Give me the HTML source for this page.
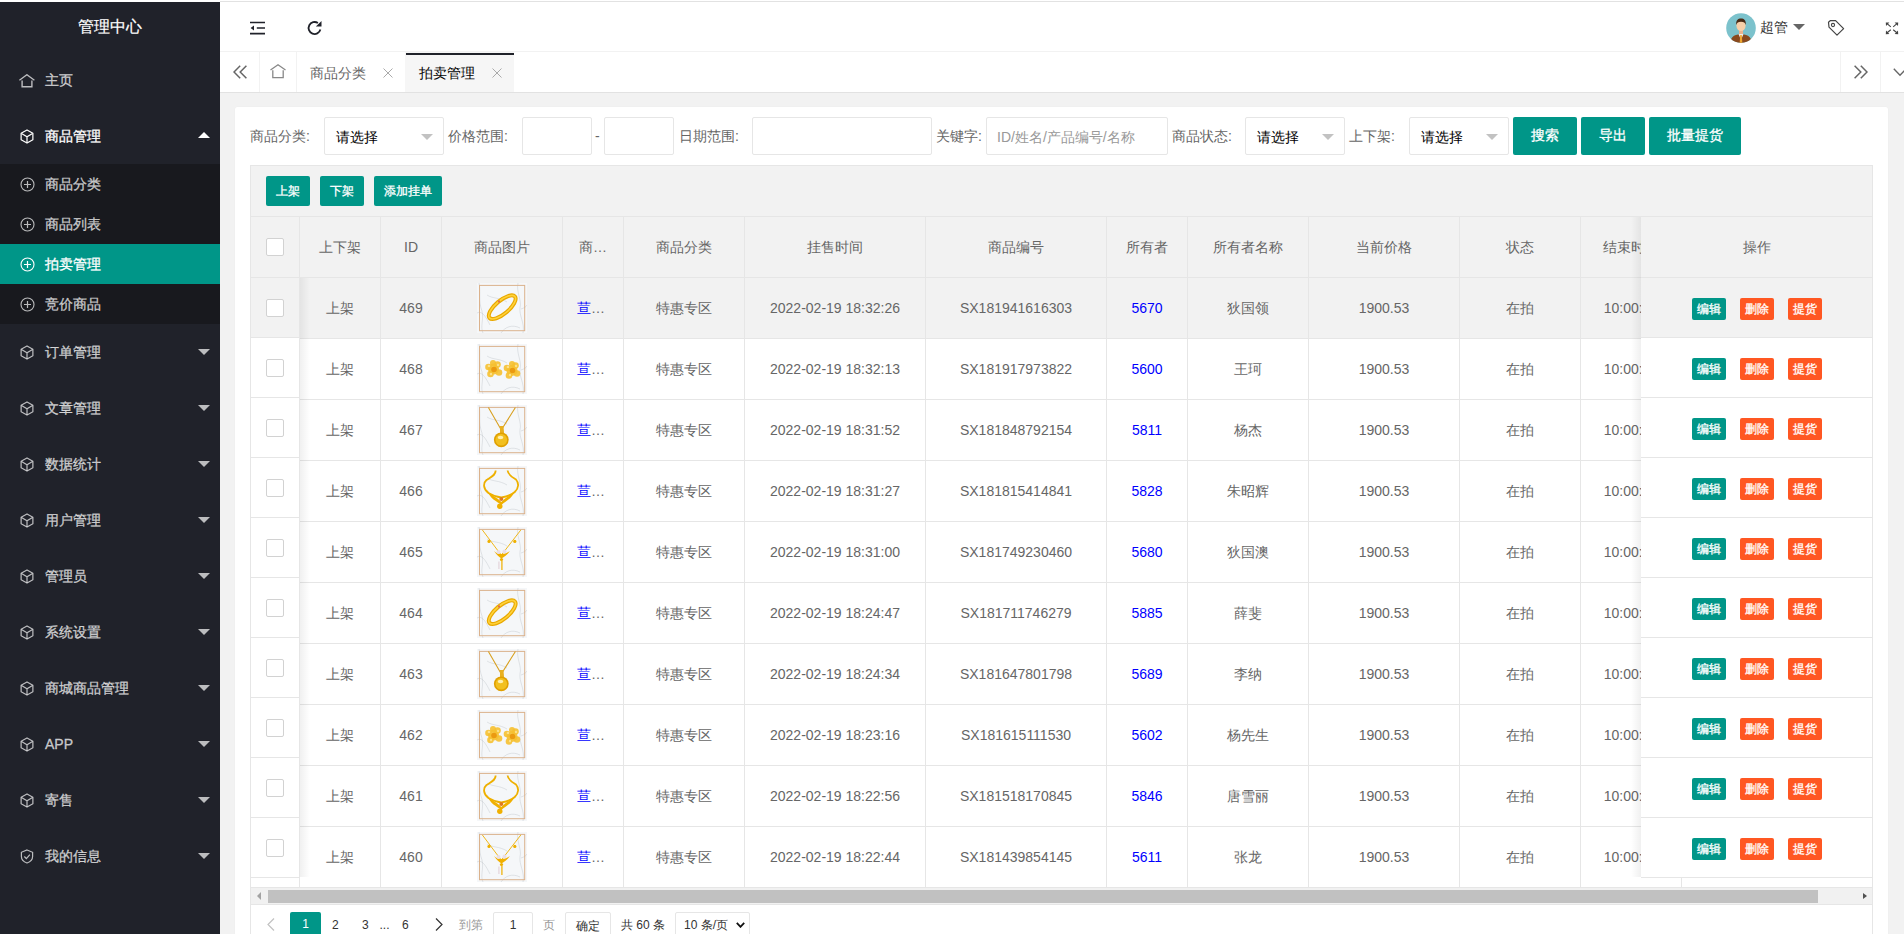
<!DOCTYPE html><html><head><meta charset="utf-8"><title>拍卖管理</title><style>
*{margin:0;padding:0;box-sizing:border-box}
html,body{width:1904px;height:934px;overflow:hidden;background:#fff;font-family:"Liberation Sans",sans-serif;font-size:14px;color:#666}
.abs{position:absolute}
#side{position:absolute;left:0;top:2px;width:220px;height:932px;background:#20222A;overflow:hidden}
#logo{position:absolute;left:0;top:0;width:220px;height:50px;line-height:50px;text-align:center;color:#fff;font-size:16px}
.mi{position:absolute;left:0;width:220px;height:56px;line-height:56px;color:rgba(255,255,255,.7)}
.mi .t{position:absolute;left:45px;top:0}
.mi svg{position:absolute}
.mi .tri{position:absolute;left:198px;width:0;height:0;border-left:6px solid transparent;border-right:6px solid transparent}
.sub{position:absolute;left:0;width:220px;height:40px;line-height:40px;color:rgba(255,255,255,.7)}
.sub .t{position:absolute;left:45px;top:0}
.sub svg{position:absolute;left:20px;top:13px}
#hdr{position:absolute;left:220px;top:1px;width:1684px;height:51px;border-top:1px solid #e2e2e2;background:#fff;border-bottom:1px solid #f2f2f2}
#tabs{position:absolute;left:220px;top:52px;width:1684px;height:41px;background:#fff;border-bottom:1px solid #e2e2e2}
#gray{position:absolute;left:220px;top:93px;width:1684px;height:841px;background:#f2f2f2}
#card{position:absolute;left:235px;top:107px;width:1653px;height:840px;background:#fff;border-radius:2px;box-shadow:0 0 1px rgba(0,0,0,.08)}
.lbl{position:absolute;top:117px;height:38px;line-height:38px;color:#666;font-size:14px;white-space:nowrap}
.inp{position:absolute;top:117px;height:38px;border:1px solid #e6e6e6;border-radius:2px;background:#fff}
.sel .v{position:absolute;left:11px;top:0;line-height:38px;color:#000;font-size:14px}
.sel .ar{position:absolute;right:10px;top:16px;width:0;height:0;border-left:6px solid transparent;border-right:6px solid transparent;border-top:6px solid #c2c2c2}
.btn{position:absolute;background:#009688;color:#fff;text-align:center;border-radius:2px;white-space:nowrap}
.bl{position:absolute;top:117px;height:38px;line-height:37px;font-size:14px}
.bs{position:absolute;top:176px;height:30px;line-height:30px;font-size:12px}
.cell{position:absolute;text-align:center;white-space:nowrap;overflow:hidden;color:#666}
.vl{position:absolute;width:1px;background:#e6e6e6}
.hl{position:absolute;height:1px;background:#e6e6e6}
.cb{position:absolute;width:18px;height:18px;border:1px solid #d2d2d2;background:#fff;border-radius:2px}
.mi .t,.sub .t{-webkit-text-stroke:.3px currentColor}
#logo{-webkit-text-stroke:.2px #fff}
.btn,.xs{-webkit-text-stroke:.3px #fff}
.xs{position:absolute;height:22px;line-height:22px;font-size:12px;color:#fff;text-align:center;border-radius:2px;width:34px}
</style></head><body><div id="side"><div id="logo">管理中心</div><div class="mi" style="top:50px"><svg width="16" height="15" viewBox="0 0 16 15" style="left:19px;top:21.5px"><path d="M0.4 6.3 L7.9 0.7 L15.4 6.3" fill="none" stroke="currentColor" stroke-width="1.3"/><path d="M3.1 6.6 V12.8 H12.9 V6.6" fill="none" stroke="currentColor" stroke-width="1.4"/></svg><span class="t">主页</span></div><div class="mi" style="top:106px;color:#fff"><svg width="14" height="15" viewBox="0 0 15 16" style="left:19.5px;top:20.5px"><path d="M7.5 1 L13.8 4.5 V11.5 L7.5 15 L1.2 11.5 V4.5 Z" fill="none" stroke="currentColor" stroke-width="1.3" stroke-linejoin="round"/><path d="M1.6 4.8 L7.5 8.2 L13.4 4.8 M7.5 8.2 V14.6" fill="none" stroke="currentColor" stroke-width="1.3"/></svg><span class="t">商品管理</span><span class="tri" style="top:24px;border-bottom:6px solid #fff"></span></div><div class="abs" style="left:0;top:162px;width:220px;height:160px;background:#18191e"></div><div class="sub" style="top:162px"><svg width="15" height="15" viewBox="0 0 15 15"><circle cx="7.5" cy="7.5" r="6.5" fill="none" stroke="currentColor" stroke-width="1.1"/><path d="M7.5 4 V11 M4 7.5 H11" stroke="currentColor" stroke-width="1.2"/></svg><span class="t">商品分类</span></div><div class="sub" style="top:202px"><svg width="15" height="15" viewBox="0 0 15 15"><circle cx="7.5" cy="7.5" r="6.5" fill="none" stroke="currentColor" stroke-width="1.1"/><path d="M7.5 4 V11 M4 7.5 H11" stroke="currentColor" stroke-width="1.2"/></svg><span class="t">商品列表</span></div><div class="sub" style="top:242px;background:#009688;color:#fff"><svg width="15" height="15" viewBox="0 0 15 15"><circle cx="7.5" cy="7.5" r="6.5" fill="none" stroke="currentColor" stroke-width="1.1"/><path d="M7.5 4 V11 M4 7.5 H11" stroke="currentColor" stroke-width="1.2"/></svg><span class="t">拍卖管理</span></div><div class="sub" style="top:282px"><svg width="15" height="15" viewBox="0 0 15 15"><circle cx="7.5" cy="7.5" r="6.5" fill="none" stroke="currentColor" stroke-width="1.1"/><path d="M7.5 4 V11 M4 7.5 H11" stroke="currentColor" stroke-width="1.2"/></svg><span class="t">竞价商品</span></div><div class="mi" style="top:322px"><svg width="14" height="15" viewBox="0 0 15 16" style="left:19.5px;top:20.5px"><path d="M7.5 1 L13.8 4.5 V11.5 L7.5 15 L1.2 11.5 V4.5 Z" fill="none" stroke="currentColor" stroke-width="1.3" stroke-linejoin="round"/><path d="M1.6 4.8 L7.5 8.2 L13.4 4.8 M7.5 8.2 V14.6" fill="none" stroke="currentColor" stroke-width="1.3"/></svg><span class="t">订单管理</span><span class="tri" style="top:25px;border-top:6px solid rgba(255,255,255,.7)"></span></div><div class="mi" style="top:378px"><svg width="14" height="15" viewBox="0 0 15 16" style="left:19.5px;top:20.5px"><path d="M7.5 1 L13.8 4.5 V11.5 L7.5 15 L1.2 11.5 V4.5 Z" fill="none" stroke="currentColor" stroke-width="1.3" stroke-linejoin="round"/><path d="M1.6 4.8 L7.5 8.2 L13.4 4.8 M7.5 8.2 V14.6" fill="none" stroke="currentColor" stroke-width="1.3"/></svg><span class="t">文章管理</span><span class="tri" style="top:25px;border-top:6px solid rgba(255,255,255,.7)"></span></div><div class="mi" style="top:434px"><svg width="14" height="15" viewBox="0 0 15 16" style="left:19.5px;top:20.5px"><path d="M7.5 1 L13.8 4.5 V11.5 L7.5 15 L1.2 11.5 V4.5 Z" fill="none" stroke="currentColor" stroke-width="1.3" stroke-linejoin="round"/><path d="M1.6 4.8 L7.5 8.2 L13.4 4.8 M7.5 8.2 V14.6" fill="none" stroke="currentColor" stroke-width="1.3"/></svg><span class="t">数据统计</span><span class="tri" style="top:25px;border-top:6px solid rgba(255,255,255,.7)"></span></div><div class="mi" style="top:490px"><svg width="14" height="15" viewBox="0 0 15 16" style="left:19.5px;top:20.5px"><path d="M7.5 1 L13.8 4.5 V11.5 L7.5 15 L1.2 11.5 V4.5 Z" fill="none" stroke="currentColor" stroke-width="1.3" stroke-linejoin="round"/><path d="M1.6 4.8 L7.5 8.2 L13.4 4.8 M7.5 8.2 V14.6" fill="none" stroke="currentColor" stroke-width="1.3"/></svg><span class="t">用户管理</span><span class="tri" style="top:25px;border-top:6px solid rgba(255,255,255,.7)"></span></div><div class="mi" style="top:546px"><svg width="14" height="15" viewBox="0 0 15 16" style="left:19.5px;top:20.5px"><path d="M7.5 1 L13.8 4.5 V11.5 L7.5 15 L1.2 11.5 V4.5 Z" fill="none" stroke="currentColor" stroke-width="1.3" stroke-linejoin="round"/><path d="M1.6 4.8 L7.5 8.2 L13.4 4.8 M7.5 8.2 V14.6" fill="none" stroke="currentColor" stroke-width="1.3"/></svg><span class="t">管理员</span><span class="tri" style="top:25px;border-top:6px solid rgba(255,255,255,.7)"></span></div><div class="mi" style="top:602px"><svg width="14" height="15" viewBox="0 0 15 16" style="left:19.5px;top:20.5px"><path d="M7.5 1 L13.8 4.5 V11.5 L7.5 15 L1.2 11.5 V4.5 Z" fill="none" stroke="currentColor" stroke-width="1.3" stroke-linejoin="round"/><path d="M1.6 4.8 L7.5 8.2 L13.4 4.8 M7.5 8.2 V14.6" fill="none" stroke="currentColor" stroke-width="1.3"/></svg><span class="t">系统设置</span><span class="tri" style="top:25px;border-top:6px solid rgba(255,255,255,.7)"></span></div><div class="mi" style="top:658px"><svg width="14" height="15" viewBox="0 0 15 16" style="left:19.5px;top:20.5px"><path d="M7.5 1 L13.8 4.5 V11.5 L7.5 15 L1.2 11.5 V4.5 Z" fill="none" stroke="currentColor" stroke-width="1.3" stroke-linejoin="round"/><path d="M1.6 4.8 L7.5 8.2 L13.4 4.8 M7.5 8.2 V14.6" fill="none" stroke="currentColor" stroke-width="1.3"/></svg><span class="t">商城商品管理</span><span class="tri" style="top:25px;border-top:6px solid rgba(255,255,255,.7)"></span></div><div class="mi" style="top:714px"><svg width="14" height="15" viewBox="0 0 15 16" style="left:19.5px;top:20.5px"><path d="M7.5 1 L13.8 4.5 V11.5 L7.5 15 L1.2 11.5 V4.5 Z" fill="none" stroke="currentColor" stroke-width="1.3" stroke-linejoin="round"/><path d="M1.6 4.8 L7.5 8.2 L13.4 4.8 M7.5 8.2 V14.6" fill="none" stroke="currentColor" stroke-width="1.3"/></svg><span class="t">APP</span><span class="tri" style="top:25px;border-top:6px solid rgba(255,255,255,.7)"></span></div><div class="mi" style="top:770px"><svg width="14" height="15" viewBox="0 0 15 16" style="left:19.5px;top:20.5px"><path d="M7.5 1 L13.8 4.5 V11.5 L7.5 15 L1.2 11.5 V4.5 Z" fill="none" stroke="currentColor" stroke-width="1.3" stroke-linejoin="round"/><path d="M1.6 4.8 L7.5 8.2 L13.4 4.8 M7.5 8.2 V14.6" fill="none" stroke="currentColor" stroke-width="1.3"/></svg><span class="t">寄售</span><span class="tri" style="top:25px;border-top:6px solid rgba(255,255,255,.7)"></span></div><div class="mi" style="top:826px"><svg width="14" height="15" viewBox="0 0 15 16" style="left:19.5px;top:20.5px"><path d="M7.5 1 L13.5 3.5 V8 C13.5 11.5 10.8 13.8 7.5 15 C4.2 13.8 1.5 11.5 1.5 8 V3.5 Z" fill="none" stroke="currentColor" stroke-width="1.3"/><path d="M4.6 8 L6.8 10.2 L10.6 6" fill="none" stroke="currentColor" stroke-width="1.3"/></svg><span class="t">我的信息</span><span class="tri" style="top:25px;border-top:6px solid rgba(255,255,255,.7)"></span></div></div><div id="hdr"><svg class="abs" style="left:29px;top:19px" width="17" height="15" viewBox="0 0 17 15"><path d="M1 1.5 H16 M7.8 7 H16 M1 12.6 H16" stroke="#20222A" stroke-width="1.7"/><path d="M1.6 7 L5 4.6 V9.4 Z" fill="#20222A"/></svg><svg class="abs" style="left:86px;top:18px" width="17" height="16" viewBox="0 0 16 16"><path d="M13.9 9.6 A6 6 0 1 1 11.4 3" fill="none" stroke="#20222A" stroke-width="1.8"/><path d="M15 1 V6.6 H9.4 Z" fill="#20222A"/></svg><svg class="abs" style="left:1506px;top:11px" width="30" height="30" viewBox="0 0 30 30">
<defs><clipPath id="avc"><circle cx="15" cy="15" r="14.8"/></clipPath></defs>
<circle cx="15" cy="15" r="14.8" fill="#7cc2cc"/>
<g clip-path="url(#avc)">
<path d="M4 30 C5 23 9 21.5 15 21 C21 21.5 25 23 26 30 Z" fill="#8a4a1f"/>
<path d="M12.5 21 L15 27 L17.5 21 Z" fill="#eee"/>
<path d="M14.2 22 H15.8 L16.3 30 H13.7 Z" fill="#f0a830"/>
<rect x="13" y="17" width="4" height="4" fill="#e9b48f"/>
<ellipse cx="15" cy="12.5" rx="4.6" ry="5.6" fill="#f8cfa8"/>
<path d="M10.2 12 C9.8 7 12 5.5 15 5.5 C18 5.5 20.2 7 19.8 12 C19 9.5 18 8.8 15 8.8 C12 8.8 11 9.5 10.2 12 Z" fill="#4a2a14"/>
</g></svg><span class="abs" style="left:1540px;top:0;line-height:50px;color:#333;font-size:14px">超管</span><span class="abs" style="left:1573px;top:22px;width:0;height:0;border-left:6px solid transparent;border-right:6px solid transparent;border-top:6px solid #666"></span><svg class="abs" style="left:1607px;top:17px" width="18" height="18" viewBox="0 0 18 18"><path d="M1.5 3.2 L3.2 1.7 L8.6 1.6 L16.6 9.6 L10 16.2 L2 8.2 Z" fill="none" stroke="#444" stroke-width="1.2" stroke-linejoin="round"/><circle cx="6" cy="6" r="1.6" fill="none" stroke="#444" stroke-width="1.1"/></svg><svg class="abs" style="left:1665px;top:18.5px" width="14" height="14" viewBox="0 0 14 14"><g fill="none" stroke="#444" stroke-width="1.1"><path d="M1.8 2.4 L5.8 5.8 M12.2 2.4 L8.2 5.8 M1.8 12 L5.8 8.8 M12.2 12 L8.2 8.8"/></g><g fill="#444"><path d="M0.8 1.4 L4.4 1.6 L1 5 Z M13.2 1.4 L9.6 1.6 L13 5 Z M0.8 13.2 L4.4 13 L1 9.6 Z M13.2 13.2 L9.6 13 L13 9.6 Z"/></g></svg></div><div id="tabs"><div class="abs" style="left:39px;top:0;width:1px;height:40px;background:#f2f2f2"></div><svg class="abs" style="left:13px;top:13px" width="15" height="15" viewBox="0 0 15 15" fill="none" stroke="#666" stroke-width="1.5"><path d="M7.2 0.8 L1 7 L7.2 13.2 M13.4 0.8 L7.2 7 L13.4 13.2"/></svg><div class="abs" style="left:76px;top:0;width:1px;height:40px;background:#f2f2f2"></div><svg class="abs" style="left:50px;top:12px" width="16" height="15" viewBox="0 0 16 15" fill="none" stroke="#888" stroke-width="1.3"><path d="M0.5 6 L8 0.8 L15.5 6"/><path d="M2.8 6.2 V13.6 H13.2 V6.2"/></svg><span class="abs" style="left:90px;top:1px;line-height:40px;color:#666">商品分类</span><svg class="abs" style="left:163px;top:16px" width="10" height="10" viewBox="0 0 10 10" stroke="#aaa" stroke-width="1"><path d="M0.5 0.5 L9.5 9.5 M9.5 0.5 L0.5 9.5"/></svg><div class="abs" style="left:185px;top:0;width:109px;height:40px;background:#f6f6f6"></div><div class="abs" style="left:186px;top:1px;width:108px;height:2px;background:#20222A"></div><span class="abs" style="left:199px;top:1px;line-height:40px;color:#000">拍卖管理</span><svg class="abs" style="left:272px;top:16px" width="10" height="10" viewBox="0 0 10 10" stroke="#aaa" stroke-width="1"><path d="M0.5 0.5 L9.5 9.5 M9.5 0.5 L0.5 9.5"/></svg><div class="abs" style="left:1620px;top:0;width:1px;height:40px;background:#f2f2f2"></div><svg class="abs" style="left:1633px;top:13px" width="15" height="15" viewBox="0 0 15 15" fill="none" stroke="#666" stroke-width="1.5"><path d="M1.6 0.8 L7.8 7 L1.6 13.2 M7.8 0.8 L14 7 L7.8 13.2"/></svg><div class="abs" style="left:1660px;top:0;width:1px;height:40px;background:#f2f2f2"></div><svg class="abs" style="left:1673px;top:16px" width="14" height="9" viewBox="0 0 14 9" fill="none" stroke="#666" stroke-width="1.4"><path d="M0.8 0.8 L7 7.2 L13.2 0.8"/></svg></div><div id="gray"></div><div id="card"></div><span class="lbl" style="left:250px">商品分类:</span><div class="inp sel" style="left:324px;width:120px"><span class="v">请选择</span><span class="ar"></span></div><span class="lbl" style="left:448px">价格范围:</span><div class="inp" style="left:522px;width:70px"></div><span class="lbl" style="left:595px;color:#666">-</span><div class="inp" style="left:604px;width:70px"></div><span class="lbl" style="left:679px">日期范围:</span><div class="inp" style="left:752px;width:180px"></div><span class="lbl" style="left:936px">关键字:</span><div class="inp" style="left:986px;width:182px"><span class="abs" style="left:10px;top:0;line-height:38px;color:#999;font-size:14px">ID/姓名/产品编号/名称</span></div><span class="lbl" style="left:1172px">商品状态:</span><div class="inp sel" style="left:1245px;width:100px"><span class="v">请选择</span><span class="ar"></span></div><span class="lbl" style="left:1349px">上下架:</span><div class="inp sel" style="left:1409px;width:100px"><span class="v">请选择</span><span class="ar"></span></div><div class="btn bl" style="left:1513px;width:64px">搜索</div><div class="btn bl" style="left:1581px;width:64px">导出</div><div class="btn bl" style="left:1649px;width:92px">批量提货</div><div class="abs" style="left:250px;top:165px;width:1623px;height:52px;background:#f2f2f2;border:1px solid #e6e6e6"></div><div class="btn bs" style="left:266px;width:44px">上架</div><div class="btn bs" style="left:320px;width:44px">下架</div><div class="btn bs" style="left:374px;width:68px">添加挂单</div><div class="abs" style="left:250px;top:217px;width:1623px;height:740px;background:#fff;border:1px solid #e6e6e6;border-top:0"></div><div class="abs" style="left:251px;top:217px;width:1621px;height:60px;background:#f2f2f2"></div><div class="abs" style="left:251px;top:278px;width:1621px;height:60px;background:#f2f2f2"></div><div class="hl" style="left:251px;top:277px;width:1621px"></div><div class="hl" style="left:251px;top:338px;width:1621px"></div><div class="hl" style="left:251px;top:399px;width:1621px"></div><div class="hl" style="left:251px;top:460px;width:1621px"></div><div class="hl" style="left:251px;top:521px;width:1621px"></div><div class="hl" style="left:251px;top:582px;width:1621px"></div><div class="hl" style="left:251px;top:643px;width:1621px"></div><div class="hl" style="left:251px;top:704px;width:1621px"></div><div class="hl" style="left:251px;top:765px;width:1621px"></div><div class="hl" style="left:251px;top:826px;width:1621px"></div><div class="hl" style="left:251px;top:887px;width:1621px"></div><div class="vl" style="left:299px;top:217px;height:671px"></div><div class="vl" style="left:380px;top:217px;height:671px"></div><div class="vl" style="left:441px;top:217px;height:671px"></div><div class="vl" style="left:562px;top:217px;height:671px"></div><div class="vl" style="left:623px;top:217px;height:671px"></div><div class="vl" style="left:744px;top:217px;height:671px"></div><div class="vl" style="left:925px;top:217px;height:671px"></div><div class="vl" style="left:1106px;top:217px;height:671px"></div><div class="vl" style="left:1187px;top:217px;height:671px"></div><div class="vl" style="left:1308px;top:217px;height:671px"></div><div class="vl" style="left:1459px;top:217px;height:671px"></div><div class="vl" style="left:1580px;top:217px;height:671px"></div><div class="vl" style="left:1681px;top:217px;height:671px"></div><div class="cell" style="left:300px;width:80px;top:237px;height:20px;line-height:20px;">上下架</div><div class="cell" style="left:381px;width:60px;top:237px;height:20px;line-height:20px;">ID</div><div class="cell" style="left:442px;width:120px;top:237px;height:20px;line-height:20px;">商品图片</div><div class="cell" style="left:563px;width:60px;top:237px;height:20px;line-height:20px;">商…</div><div class="cell" style="left:624px;width:120px;top:237px;height:20px;line-height:20px;">商品分类</div><div class="cell" style="left:745px;width:180px;top:237px;height:20px;line-height:20px;">挂售时间</div><div class="cell" style="left:926px;width:180px;top:237px;height:20px;line-height:20px;">商品编号</div><div class="cell" style="left:1107px;width:80px;top:237px;height:20px;line-height:20px;">所有者</div><div class="cell" style="left:1188px;width:120px;top:237px;height:20px;line-height:20px;">所有者名称</div><div class="cell" style="left:1309px;width:150px;top:237px;height:20px;line-height:20px;">当前价格</div><div class="cell" style="left:1460px;width:120px;top:237px;height:20px;line-height:20px;">状态</div><div class="cell" style="left:1581px;width:100px;top:237px;height:20px;line-height:20px;">结束时间</div><div class="cell" style="left:1682px;width:180px;top:237px;height:20px;line-height:20px;">操作时间</div><div class="cell" style="left:300px;width:80px;top:298px;height:20px;line-height:20px;">上架</div><div class="cell" style="left:381px;width:60px;top:298px;height:20px;line-height:20px;">469</div><svg class="abs" style="left:477px;top:283px" width="50" height="50" viewBox="0 0 50 50"><rect width="50" height="50" fill="#f5f7f9"/><g fill="none" stroke="#aeb4bc" stroke-opacity=".55" stroke-width=".6"><path d="M2 0 C4 8 1 18 5 28 C7 36 3 44 6 50"/><path d="M0 30 C5 27 9 34 13 42"/><path d="M41 0 C39 9 45 17 43 25 C42 33 48 40 46 50"/><path d="M24 50 C28 44 35 41 43 45"/><path d="M10 12 C16 16 22 14 30 19"/><path d="M44 26 C47 25 49 24 50 22"/></g><rect x="2.5" y="2.4" width="45.2" height="45.3" fill="none" stroke="#dbb28c" stroke-width="1"/><ellipse cx="25.2" cy="24.2" rx="16.6" ry="6.6" transform="rotate(-40 25.2 24.2)" fill="none" stroke="#e8a800" stroke-width="4"/><ellipse cx="25.2" cy="24.2" rx="16.6" ry="6.6" transform="rotate(-40 25.2 24.2)" fill="none" stroke="#ffd23a" stroke-width="1.6"/><rect x="21" y="17.5" width="2" height="2" fill="#e07050"/></svg><div class="cell" style="left:561px;width:60px;top:298px;height:20px;line-height:20px;"><span style="color:#0000ff">荁</span><span style="color:#666">…</span></div><div class="cell" style="left:624px;width:120px;top:298px;height:20px;line-height:20px;">特惠专区</div><div class="cell" style="left:745px;width:180px;top:298px;height:20px;line-height:20px;">2022-02-19 18:32:26</div><div class="cell" style="left:926px;width:180px;top:298px;height:20px;line-height:20px;">SX181941616303</div><div class="cell" style="left:1107px;width:80px;top:298px;height:20px;line-height:20px;color:#0000ff">5670</div><div class="cell" style="left:1188px;width:120px;top:298px;height:20px;line-height:20px;">狄国领</div><div class="cell" style="left:1309px;width:150px;top:298px;height:20px;line-height:20px;">1900.53</div><div class="cell" style="left:1460px;width:120px;top:298px;height:20px;line-height:20px;">在拍</div><div class="cell" style="left:1581px;width:100px;top:298px;height:20px;line-height:20px;">10:00:00</div><div class="cell" style="left:300px;width:80px;top:359px;height:20px;line-height:20px;">上架</div><div class="cell" style="left:381px;width:60px;top:359px;height:20px;line-height:20px;">468</div><svg class="abs" style="left:477px;top:344px" width="50" height="50" viewBox="0 0 50 50"><rect width="50" height="50" fill="#f5f7f9"/><g fill="none" stroke="#aeb4bc" stroke-opacity=".55" stroke-width=".6"><path d="M2 0 C4 8 1 18 5 28 C7 36 3 44 6 50"/><path d="M0 30 C5 27 9 34 13 42"/><path d="M41 0 C39 9 45 17 43 25 C42 33 48 40 46 50"/><path d="M24 50 C28 44 35 41 43 45"/><path d="M10 12 C16 16 22 14 30 19"/><path d="M44 26 C47 25 49 24 50 22"/></g><rect x="2.5" y="2.4" width="45.2" height="45.3" fill="none" stroke="#dbb28c" stroke-width="1"/><g fill="#f6c030" fill-opacity=".9"><circle cx="16.5" cy="25" r="5.5"/><circle cx="35" cy="26.4" r="5.5"/><circle cx="11.5" cy="23" r="3.3"/><circle cx="20.5" cy="20.5" r="3.3"/><circle cx="22" cy="28.5" r="3.3"/><circle cx="13.5" cy="30" r="3.3"/><circle cx="16" cy="19" r="3"/><circle cx="30" cy="24" r="3.3"/><circle cx="38.5" cy="21.5" r="3.3"/><circle cx="40" cy="29.5" r="3.3"/><circle cx="32" cy="31.5" r="3.3"/><circle cx="35" cy="20" r="3"/></g><g fill="#fbe08a"><circle cx="12" cy="22" r="1.3"/><circle cx="21" cy="21" r="1.2"/><circle cx="31" cy="23" r="1.3"/><circle cx="39" cy="22" r="1.2"/><circle cx="14" cy="30" r="1.2"/><circle cx="33" cy="31" r="1.2"/></g><circle cx="17" cy="25.5" r="2.8" fill="#eb9a10"/><circle cx="35.5" cy="26.5" r="2.8" fill="#eb9a10"/></svg><div class="cell" style="left:561px;width:60px;top:359px;height:20px;line-height:20px;"><span style="color:#0000ff">荁</span><span style="color:#666">…</span></div><div class="cell" style="left:624px;width:120px;top:359px;height:20px;line-height:20px;">特惠专区</div><div class="cell" style="left:745px;width:180px;top:359px;height:20px;line-height:20px;">2022-02-19 18:32:13</div><div class="cell" style="left:926px;width:180px;top:359px;height:20px;line-height:20px;">SX181917973822</div><div class="cell" style="left:1107px;width:80px;top:359px;height:20px;line-height:20px;color:#0000ff">5600</div><div class="cell" style="left:1188px;width:120px;top:359px;height:20px;line-height:20px;">王珂</div><div class="cell" style="left:1309px;width:150px;top:359px;height:20px;line-height:20px;">1900.53</div><div class="cell" style="left:1460px;width:120px;top:359px;height:20px;line-height:20px;">在拍</div><div class="cell" style="left:1581px;width:100px;top:359px;height:20px;line-height:20px;">10:00:00</div><div class="cell" style="left:300px;width:80px;top:420px;height:20px;line-height:20px;">上架</div><div class="cell" style="left:381px;width:60px;top:420px;height:20px;line-height:20px;">467</div><svg class="abs" style="left:477px;top:405px" width="50" height="50" viewBox="0 0 50 50"><rect width="50" height="50" fill="#f5f7f9"/><g fill="none" stroke="#aeb4bc" stroke-opacity=".55" stroke-width=".6"><path d="M2 0 C4 8 1 18 5 28 C7 36 3 44 6 50"/><path d="M0 30 C5 27 9 34 13 42"/><path d="M41 0 C39 9 45 17 43 25 C42 33 48 40 46 50"/><path d="M24 50 C28 44 35 41 43 45"/><path d="M10 12 C16 16 22 14 30 19"/><path d="M44 26 C47 25 49 24 50 22"/></g><rect x="2.5" y="2.4" width="45.2" height="45.3" fill="none" stroke="#dbb28c" stroke-width="1"/><path d="M11.4 2.5 L24.3 25 L38.4 2.5" fill="none" stroke="#d8a020" stroke-width="1.1"/><path d="M23 21 L26.5 21 L27 28 L23 28 Z" fill="#e8b020"/><circle cx="24.3" cy="34.8" r="7.4" fill="#e0a000"/><circle cx="24.3" cy="34.8" r="5.8" fill="#f2c020"/><ellipse cx="23.5" cy="32.5" rx="2.8" ry="1.8" fill="#fff0b0"/></svg><div class="cell" style="left:561px;width:60px;top:420px;height:20px;line-height:20px;"><span style="color:#0000ff">荁</span><span style="color:#666">…</span></div><div class="cell" style="left:624px;width:120px;top:420px;height:20px;line-height:20px;">特惠专区</div><div class="cell" style="left:745px;width:180px;top:420px;height:20px;line-height:20px;">2022-02-19 18:31:52</div><div class="cell" style="left:926px;width:180px;top:420px;height:20px;line-height:20px;">SX181848792154</div><div class="cell" style="left:1107px;width:80px;top:420px;height:20px;line-height:20px;color:#0000ff">5811</div><div class="cell" style="left:1188px;width:120px;top:420px;height:20px;line-height:20px;">杨杰</div><div class="cell" style="left:1309px;width:150px;top:420px;height:20px;line-height:20px;">1900.53</div><div class="cell" style="left:1460px;width:120px;top:420px;height:20px;line-height:20px;">在拍</div><div class="cell" style="left:1581px;width:100px;top:420px;height:20px;line-height:20px;">10:00:00</div><div class="cell" style="left:300px;width:80px;top:481px;height:20px;line-height:20px;">上架</div><div class="cell" style="left:381px;width:60px;top:481px;height:20px;line-height:20px;">466</div><svg class="abs" style="left:477px;top:466px" width="50" height="50" viewBox="0 0 50 50"><rect width="50" height="50" fill="#f5f7f9"/><g fill="none" stroke="#aeb4bc" stroke-opacity=".55" stroke-width=".6"><path d="M2 0 C4 8 1 18 5 28 C7 36 3 44 6 50"/><path d="M0 30 C5 27 9 34 13 42"/><path d="M41 0 C39 9 45 17 43 25 C42 33 48 40 46 50"/><path d="M24 50 C28 44 35 41 43 45"/><path d="M10 12 C16 16 22 14 30 19"/><path d="M44 26 C47 25 49 24 50 22"/></g><rect x="2.5" y="2.4" width="45.2" height="45.3" fill="none" stroke="#dbb28c" stroke-width="1"/><path d="M18.6 4.5 C19 9 14 11 9.5 14 C6 17 6 23 11.4 27 C16 30 21 31 24.3 31.5 C27.5 31 33 30 37.8 26 C42 22 42 17 39 13.5 C35 11 31 9 30.6 4.5" fill="none" stroke="#eeb000" stroke-width="1.8"/><path d="M10 24 C14 30 19 30 24.3 36 C29.5 30 34 30 38.5 24 C35 33 29 35 24.3 39 C19.5 35 13 33 10 24 Z" fill="#f0b000"/><circle cx="22.8" cy="40.2" r="2.7" fill="#f0b000"/><circle cx="24.3" cy="33" r="2" fill="#e07a20"/></svg><div class="cell" style="left:561px;width:60px;top:481px;height:20px;line-height:20px;"><span style="color:#0000ff">荁</span><span style="color:#666">…</span></div><div class="cell" style="left:624px;width:120px;top:481px;height:20px;line-height:20px;">特惠专区</div><div class="cell" style="left:745px;width:180px;top:481px;height:20px;line-height:20px;">2022-02-19 18:31:27</div><div class="cell" style="left:926px;width:180px;top:481px;height:20px;line-height:20px;">SX181815414841</div><div class="cell" style="left:1107px;width:80px;top:481px;height:20px;line-height:20px;color:#0000ff">5828</div><div class="cell" style="left:1188px;width:120px;top:481px;height:20px;line-height:20px;">朱昭辉</div><div class="cell" style="left:1309px;width:150px;top:481px;height:20px;line-height:20px;">1900.53</div><div class="cell" style="left:1460px;width:120px;top:481px;height:20px;line-height:20px;">在拍</div><div class="cell" style="left:1581px;width:100px;top:481px;height:20px;line-height:20px;">10:00:00</div><div class="cell" style="left:300px;width:80px;top:542px;height:20px;line-height:20px;">上架</div><div class="cell" style="left:381px;width:60px;top:542px;height:20px;line-height:20px;">465</div><svg class="abs" style="left:477px;top:527px" width="50" height="50" viewBox="0 0 50 50"><rect width="50" height="50" fill="#f5f7f9"/><g fill="none" stroke="#aeb4bc" stroke-opacity=".55" stroke-width=".6"><path d="M2 0 C4 8 1 18 5 28 C7 36 3 44 6 50"/><path d="M0 30 C5 27 9 34 13 42"/><path d="M41 0 C39 9 45 17 43 25 C42 33 48 40 46 50"/><path d="M24 50 C28 44 35 41 43 45"/><path d="M10 12 C16 16 22 14 30 19"/><path d="M44 26 C47 25 49 24 50 22"/></g><rect x="2.5" y="2.4" width="45.2" height="45.3" fill="none" stroke="#dbb28c" stroke-width="1"/><path d="M5.4 3 L24.3 28.2 L43.8 3" fill="none" stroke="#eeb000" stroke-width=".9"/><circle cx="12" cy="14.4" r="1.6" fill="#eeb000"/><circle cx="37.8" cy="14.4" r="1.6" fill="#eeb000"/><path d="M17 24 C20 28 22 30 24.5 31.5 C27 30 30 28 33 24 C30 26 28 27 24.5 27 C21 27 19 26 17 24 Z" fill="#f0b000"/><circle cx="21.5" cy="25" r="2" fill="#eadfe6"/><circle cx="27.5" cy="24.5" r="2" fill="#eadfe6"/><circle cx="24.5" cy="32.5" r="1.6" fill="#f0b000"/><path d="M24.9 34 V43" stroke="#efb820" stroke-width="1.4"/><path d="M21.9 34.5 V42" stroke="#e4d4dc" stroke-width="1.2"/></svg><div class="cell" style="left:561px;width:60px;top:542px;height:20px;line-height:20px;"><span style="color:#0000ff">荁</span><span style="color:#666">…</span></div><div class="cell" style="left:624px;width:120px;top:542px;height:20px;line-height:20px;">特惠专区</div><div class="cell" style="left:745px;width:180px;top:542px;height:20px;line-height:20px;">2022-02-19 18:31:00</div><div class="cell" style="left:926px;width:180px;top:542px;height:20px;line-height:20px;">SX181749230460</div><div class="cell" style="left:1107px;width:80px;top:542px;height:20px;line-height:20px;color:#0000ff">5680</div><div class="cell" style="left:1188px;width:120px;top:542px;height:20px;line-height:20px;">狄国澳</div><div class="cell" style="left:1309px;width:150px;top:542px;height:20px;line-height:20px;">1900.53</div><div class="cell" style="left:1460px;width:120px;top:542px;height:20px;line-height:20px;">在拍</div><div class="cell" style="left:1581px;width:100px;top:542px;height:20px;line-height:20px;">10:00:00</div><div class="cell" style="left:300px;width:80px;top:603px;height:20px;line-height:20px;">上架</div><div class="cell" style="left:381px;width:60px;top:603px;height:20px;line-height:20px;">464</div><svg class="abs" style="left:477px;top:588px" width="50" height="50" viewBox="0 0 50 50"><rect width="50" height="50" fill="#f5f7f9"/><g fill="none" stroke="#aeb4bc" stroke-opacity=".55" stroke-width=".6"><path d="M2 0 C4 8 1 18 5 28 C7 36 3 44 6 50"/><path d="M0 30 C5 27 9 34 13 42"/><path d="M41 0 C39 9 45 17 43 25 C42 33 48 40 46 50"/><path d="M24 50 C28 44 35 41 43 45"/><path d="M10 12 C16 16 22 14 30 19"/><path d="M44 26 C47 25 49 24 50 22"/></g><rect x="2.5" y="2.4" width="45.2" height="45.3" fill="none" stroke="#dbb28c" stroke-width="1"/><ellipse cx="25.2" cy="24.2" rx="16.6" ry="6.6" transform="rotate(-40 25.2 24.2)" fill="none" stroke="#e8a800" stroke-width="4"/><ellipse cx="25.2" cy="24.2" rx="16.6" ry="6.6" transform="rotate(-40 25.2 24.2)" fill="none" stroke="#ffd23a" stroke-width="1.6"/><rect x="21" y="17.5" width="2" height="2" fill="#e07050"/></svg><div class="cell" style="left:561px;width:60px;top:603px;height:20px;line-height:20px;"><span style="color:#0000ff">荁</span><span style="color:#666">…</span></div><div class="cell" style="left:624px;width:120px;top:603px;height:20px;line-height:20px;">特惠专区</div><div class="cell" style="left:745px;width:180px;top:603px;height:20px;line-height:20px;">2022-02-19 18:24:47</div><div class="cell" style="left:926px;width:180px;top:603px;height:20px;line-height:20px;">SX181711746279</div><div class="cell" style="left:1107px;width:80px;top:603px;height:20px;line-height:20px;color:#0000ff">5885</div><div class="cell" style="left:1188px;width:120px;top:603px;height:20px;line-height:20px;">薛斐</div><div class="cell" style="left:1309px;width:150px;top:603px;height:20px;line-height:20px;">1900.53</div><div class="cell" style="left:1460px;width:120px;top:603px;height:20px;line-height:20px;">在拍</div><div class="cell" style="left:1581px;width:100px;top:603px;height:20px;line-height:20px;">10:00:00</div><div class="cell" style="left:300px;width:80px;top:664px;height:20px;line-height:20px;">上架</div><div class="cell" style="left:381px;width:60px;top:664px;height:20px;line-height:20px;">463</div><svg class="abs" style="left:477px;top:649px" width="50" height="50" viewBox="0 0 50 50"><rect width="50" height="50" fill="#f5f7f9"/><g fill="none" stroke="#aeb4bc" stroke-opacity=".55" stroke-width=".6"><path d="M2 0 C4 8 1 18 5 28 C7 36 3 44 6 50"/><path d="M0 30 C5 27 9 34 13 42"/><path d="M41 0 C39 9 45 17 43 25 C42 33 48 40 46 50"/><path d="M24 50 C28 44 35 41 43 45"/><path d="M10 12 C16 16 22 14 30 19"/><path d="M44 26 C47 25 49 24 50 22"/></g><rect x="2.5" y="2.4" width="45.2" height="45.3" fill="none" stroke="#dbb28c" stroke-width="1"/><path d="M11.4 2.5 L24.3 25 L38.4 2.5" fill="none" stroke="#d8a020" stroke-width="1.1"/><path d="M23 21 L26.5 21 L27 28 L23 28 Z" fill="#e8b020"/><circle cx="24.3" cy="34.8" r="7.4" fill="#e0a000"/><circle cx="24.3" cy="34.8" r="5.8" fill="#f2c020"/><ellipse cx="23.5" cy="32.5" rx="2.8" ry="1.8" fill="#fff0b0"/></svg><div class="cell" style="left:561px;width:60px;top:664px;height:20px;line-height:20px;"><span style="color:#0000ff">荁</span><span style="color:#666">…</span></div><div class="cell" style="left:624px;width:120px;top:664px;height:20px;line-height:20px;">特惠专区</div><div class="cell" style="left:745px;width:180px;top:664px;height:20px;line-height:20px;">2022-02-19 18:24:34</div><div class="cell" style="left:926px;width:180px;top:664px;height:20px;line-height:20px;">SX181647801798</div><div class="cell" style="left:1107px;width:80px;top:664px;height:20px;line-height:20px;color:#0000ff">5689</div><div class="cell" style="left:1188px;width:120px;top:664px;height:20px;line-height:20px;">李纳</div><div class="cell" style="left:1309px;width:150px;top:664px;height:20px;line-height:20px;">1900.53</div><div class="cell" style="left:1460px;width:120px;top:664px;height:20px;line-height:20px;">在拍</div><div class="cell" style="left:1581px;width:100px;top:664px;height:20px;line-height:20px;">10:00:00</div><div class="cell" style="left:300px;width:80px;top:725px;height:20px;line-height:20px;">上架</div><div class="cell" style="left:381px;width:60px;top:725px;height:20px;line-height:20px;">462</div><svg class="abs" style="left:477px;top:710px" width="50" height="50" viewBox="0 0 50 50"><rect width="50" height="50" fill="#f5f7f9"/><g fill="none" stroke="#aeb4bc" stroke-opacity=".55" stroke-width=".6"><path d="M2 0 C4 8 1 18 5 28 C7 36 3 44 6 50"/><path d="M0 30 C5 27 9 34 13 42"/><path d="M41 0 C39 9 45 17 43 25 C42 33 48 40 46 50"/><path d="M24 50 C28 44 35 41 43 45"/><path d="M10 12 C16 16 22 14 30 19"/><path d="M44 26 C47 25 49 24 50 22"/></g><rect x="2.5" y="2.4" width="45.2" height="45.3" fill="none" stroke="#dbb28c" stroke-width="1"/><g fill="#f6c030" fill-opacity=".9"><circle cx="16.5" cy="25" r="5.5"/><circle cx="35" cy="26.4" r="5.5"/><circle cx="11.5" cy="23" r="3.3"/><circle cx="20.5" cy="20.5" r="3.3"/><circle cx="22" cy="28.5" r="3.3"/><circle cx="13.5" cy="30" r="3.3"/><circle cx="16" cy="19" r="3"/><circle cx="30" cy="24" r="3.3"/><circle cx="38.5" cy="21.5" r="3.3"/><circle cx="40" cy="29.5" r="3.3"/><circle cx="32" cy="31.5" r="3.3"/><circle cx="35" cy="20" r="3"/></g><g fill="#fbe08a"><circle cx="12" cy="22" r="1.3"/><circle cx="21" cy="21" r="1.2"/><circle cx="31" cy="23" r="1.3"/><circle cx="39" cy="22" r="1.2"/><circle cx="14" cy="30" r="1.2"/><circle cx="33" cy="31" r="1.2"/></g><circle cx="17" cy="25.5" r="2.8" fill="#eb9a10"/><circle cx="35.5" cy="26.5" r="2.8" fill="#eb9a10"/></svg><div class="cell" style="left:561px;width:60px;top:725px;height:20px;line-height:20px;"><span style="color:#0000ff">荁</span><span style="color:#666">…</span></div><div class="cell" style="left:624px;width:120px;top:725px;height:20px;line-height:20px;">特惠专区</div><div class="cell" style="left:745px;width:180px;top:725px;height:20px;line-height:20px;">2022-02-19 18:23:16</div><div class="cell" style="left:926px;width:180px;top:725px;height:20px;line-height:20px;">SX181615111530</div><div class="cell" style="left:1107px;width:80px;top:725px;height:20px;line-height:20px;color:#0000ff">5602</div><div class="cell" style="left:1188px;width:120px;top:725px;height:20px;line-height:20px;">杨先生</div><div class="cell" style="left:1309px;width:150px;top:725px;height:20px;line-height:20px;">1900.53</div><div class="cell" style="left:1460px;width:120px;top:725px;height:20px;line-height:20px;">在拍</div><div class="cell" style="left:1581px;width:100px;top:725px;height:20px;line-height:20px;">10:00:00</div><div class="cell" style="left:300px;width:80px;top:786px;height:20px;line-height:20px;">上架</div><div class="cell" style="left:381px;width:60px;top:786px;height:20px;line-height:20px;">461</div><svg class="abs" style="left:477px;top:771px" width="50" height="50" viewBox="0 0 50 50"><rect width="50" height="50" fill="#f5f7f9"/><g fill="none" stroke="#aeb4bc" stroke-opacity=".55" stroke-width=".6"><path d="M2 0 C4 8 1 18 5 28 C7 36 3 44 6 50"/><path d="M0 30 C5 27 9 34 13 42"/><path d="M41 0 C39 9 45 17 43 25 C42 33 48 40 46 50"/><path d="M24 50 C28 44 35 41 43 45"/><path d="M10 12 C16 16 22 14 30 19"/><path d="M44 26 C47 25 49 24 50 22"/></g><rect x="2.5" y="2.4" width="45.2" height="45.3" fill="none" stroke="#dbb28c" stroke-width="1"/><path d="M18.6 4.5 C19 9 14 11 9.5 14 C6 17 6 23 11.4 27 C16 30 21 31 24.3 31.5 C27.5 31 33 30 37.8 26 C42 22 42 17 39 13.5 C35 11 31 9 30.6 4.5" fill="none" stroke="#eeb000" stroke-width="1.8"/><path d="M10 24 C14 30 19 30 24.3 36 C29.5 30 34 30 38.5 24 C35 33 29 35 24.3 39 C19.5 35 13 33 10 24 Z" fill="#f0b000"/><circle cx="22.8" cy="40.2" r="2.7" fill="#f0b000"/><circle cx="24.3" cy="33" r="2" fill="#e07a20"/></svg><div class="cell" style="left:561px;width:60px;top:786px;height:20px;line-height:20px;"><span style="color:#0000ff">荁</span><span style="color:#666">…</span></div><div class="cell" style="left:624px;width:120px;top:786px;height:20px;line-height:20px;">特惠专区</div><div class="cell" style="left:745px;width:180px;top:786px;height:20px;line-height:20px;">2022-02-19 18:22:56</div><div class="cell" style="left:926px;width:180px;top:786px;height:20px;line-height:20px;">SX181518170845</div><div class="cell" style="left:1107px;width:80px;top:786px;height:20px;line-height:20px;color:#0000ff">5846</div><div class="cell" style="left:1188px;width:120px;top:786px;height:20px;line-height:20px;">唐雪丽</div><div class="cell" style="left:1309px;width:150px;top:786px;height:20px;line-height:20px;">1900.53</div><div class="cell" style="left:1460px;width:120px;top:786px;height:20px;line-height:20px;">在拍</div><div class="cell" style="left:1581px;width:100px;top:786px;height:20px;line-height:20px;">10:00:00</div><div class="cell" style="left:300px;width:80px;top:847px;height:20px;line-height:20px;">上架</div><div class="cell" style="left:381px;width:60px;top:847px;height:20px;line-height:20px;">460</div><svg class="abs" style="left:477px;top:832px" width="50" height="50" viewBox="0 0 50 50"><rect width="50" height="50" fill="#f5f7f9"/><g fill="none" stroke="#aeb4bc" stroke-opacity=".55" stroke-width=".6"><path d="M2 0 C4 8 1 18 5 28 C7 36 3 44 6 50"/><path d="M0 30 C5 27 9 34 13 42"/><path d="M41 0 C39 9 45 17 43 25 C42 33 48 40 46 50"/><path d="M24 50 C28 44 35 41 43 45"/><path d="M10 12 C16 16 22 14 30 19"/><path d="M44 26 C47 25 49 24 50 22"/></g><rect x="2.5" y="2.4" width="45.2" height="45.3" fill="none" stroke="#dbb28c" stroke-width="1"/><path d="M5.4 3 L24.3 28.2 L43.8 3" fill="none" stroke="#eeb000" stroke-width=".9"/><circle cx="12" cy="14.4" r="1.6" fill="#eeb000"/><circle cx="37.8" cy="14.4" r="1.6" fill="#eeb000"/><path d="M17 24 C20 28 22 30 24.5 31.5 C27 30 30 28 33 24 C30 26 28 27 24.5 27 C21 27 19 26 17 24 Z" fill="#f0b000"/><circle cx="21.5" cy="25" r="2" fill="#eadfe6"/><circle cx="27.5" cy="24.5" r="2" fill="#eadfe6"/><circle cx="24.5" cy="32.5" r="1.6" fill="#f0b000"/><path d="M24.9 34 V43" stroke="#efb820" stroke-width="1.4"/><path d="M21.9 34.5 V42" stroke="#e4d4dc" stroke-width="1.2"/></svg><div class="cell" style="left:561px;width:60px;top:847px;height:20px;line-height:20px;"><span style="color:#0000ff">荁</span><span style="color:#666">…</span></div><div class="cell" style="left:624px;width:120px;top:847px;height:20px;line-height:20px;">特惠专区</div><div class="cell" style="left:745px;width:180px;top:847px;height:20px;line-height:20px;">2022-02-19 18:22:44</div><div class="cell" style="left:926px;width:180px;top:847px;height:20px;line-height:20px;">SX181439854145</div><div class="cell" style="left:1107px;width:80px;top:847px;height:20px;line-height:20px;color:#0000ff">5611</div><div class="cell" style="left:1188px;width:120px;top:847px;height:20px;line-height:20px;">张龙</div><div class="cell" style="left:1309px;width:150px;top:847px;height:20px;line-height:20px;">1900.53</div><div class="cell" style="left:1460px;width:120px;top:847px;height:20px;line-height:20px;">在拍</div><div class="cell" style="left:1581px;width:100px;top:847px;height:20px;line-height:20px;">10:00:00</div><div class="abs" style="left:300px;top:278px;width:10px;height:599px;background:linear-gradient(to right,rgba(0,0,0,.06),rgba(0,0,0,0))"></div><div class="abs" style="left:251px;top:217px;width:48px;height:660px;background:#fff"></div><div class="abs" style="left:251px;top:217px;width:48px;height:60px;background:#f2f2f2"></div><div class="abs" style="left:251px;top:278px;width:48px;height:59px;background:#f2f2f2"></div><div class="hl" style="left:251px;top:277px;width:48px"></div><div class="hl" style="left:251px;top:337px;width:48px"></div><div class="hl" style="left:251px;top:397px;width:48px"></div><div class="hl" style="left:251px;top:457px;width:48px"></div><div class="hl" style="left:251px;top:517px;width:48px"></div><div class="hl" style="left:251px;top:577px;width:48px"></div><div class="hl" style="left:251px;top:637px;width:48px"></div><div class="hl" style="left:251px;top:697px;width:48px"></div><div class="hl" style="left:251px;top:757px;width:48px"></div><div class="hl" style="left:251px;top:817px;width:48px"></div><div class="hl" style="left:251px;top:877px;width:48px"></div><div class="vl" style="left:299px;top:217px;height:671px"></div><div class="cb" style="left:266px;top:238px"></div><div class="cb" style="left:266px;top:299px"></div><div class="cb" style="left:266px;top:359px"></div><div class="cb" style="left:266px;top:419px"></div><div class="cb" style="left:266px;top:479px"></div><div class="cb" style="left:266px;top:539px"></div><div class="cb" style="left:266px;top:599px"></div><div class="cb" style="left:266px;top:659px"></div><div class="cb" style="left:266px;top:719px"></div><div class="cb" style="left:266px;top:779px"></div><div class="cb" style="left:266px;top:839px"></div><div class="abs" style="left:1631px;top:217px;width:10px;height:660px;background:linear-gradient(to left,rgba(0,0,0,.06),rgba(0,0,0,0))"></div><div class="abs" style="left:1641px;top:217px;width:231px;height:660px;background:#fff"></div><div class="abs" style="left:1641px;top:217px;width:231px;height:60px;background:#f2f2f2"></div><div class="abs" style="left:1641px;top:278px;width:231px;height:59px;background:#f2f2f2"></div><div class="hl" style="left:1641px;top:277px;width:231px"></div><div class="hl" style="left:1641px;top:337px;width:231px"></div><div class="hl" style="left:1641px;top:397px;width:231px"></div><div class="hl" style="left:1641px;top:457px;width:231px"></div><div class="hl" style="left:1641px;top:517px;width:231px"></div><div class="hl" style="left:1641px;top:577px;width:231px"></div><div class="hl" style="left:1641px;top:637px;width:231px"></div><div class="hl" style="left:1641px;top:697px;width:231px"></div><div class="hl" style="left:1641px;top:757px;width:231px"></div><div class="hl" style="left:1641px;top:817px;width:231px"></div><div class="hl" style="left:1641px;top:877px;width:231px"></div><div class="cell" style="left:1641px;width:231px;top:237px;height:20px;line-height:20px">操作</div><div class="xs" style="left:1692px;top:298px;background:#009688">编辑</div><div class="xs" style="left:1740px;top:298px;background:#FF5722">删除</div><div class="xs" style="left:1788px;top:298px;background:#FF5722">提货</div><div class="xs" style="left:1692px;top:358px;background:#009688">编辑</div><div class="xs" style="left:1740px;top:358px;background:#FF5722">删除</div><div class="xs" style="left:1788px;top:358px;background:#FF5722">提货</div><div class="xs" style="left:1692px;top:418px;background:#009688">编辑</div><div class="xs" style="left:1740px;top:418px;background:#FF5722">删除</div><div class="xs" style="left:1788px;top:418px;background:#FF5722">提货</div><div class="xs" style="left:1692px;top:478px;background:#009688">编辑</div><div class="xs" style="left:1740px;top:478px;background:#FF5722">删除</div><div class="xs" style="left:1788px;top:478px;background:#FF5722">提货</div><div class="xs" style="left:1692px;top:538px;background:#009688">编辑</div><div class="xs" style="left:1740px;top:538px;background:#FF5722">删除</div><div class="xs" style="left:1788px;top:538px;background:#FF5722">提货</div><div class="xs" style="left:1692px;top:598px;background:#009688">编辑</div><div class="xs" style="left:1740px;top:598px;background:#FF5722">删除</div><div class="xs" style="left:1788px;top:598px;background:#FF5722">提货</div><div class="xs" style="left:1692px;top:658px;background:#009688">编辑</div><div class="xs" style="left:1740px;top:658px;background:#FF5722">删除</div><div class="xs" style="left:1788px;top:658px;background:#FF5722">提货</div><div class="xs" style="left:1692px;top:718px;background:#009688">编辑</div><div class="xs" style="left:1740px;top:718px;background:#FF5722">删除</div><div class="xs" style="left:1788px;top:718px;background:#FF5722">提货</div><div class="xs" style="left:1692px;top:778px;background:#009688">编辑</div><div class="xs" style="left:1740px;top:778px;background:#FF5722">删除</div><div class="xs" style="left:1788px;top:778px;background:#FF5722">提货</div><div class="xs" style="left:1692px;top:838px;background:#009688">编辑</div><div class="xs" style="left:1740px;top:838px;background:#FF5722">删除</div><div class="xs" style="left:1788px;top:838px;background:#FF5722">提货</div><div class="abs" style="left:251px;top:888px;width:1621px;height:16px;background:#f1f1f1"></div><div class="abs" style="left:268px;top:890px;width:1550px;height:13px;background:#c1c1c1"></div><span class="abs" style="left:257px;top:892px;width:0;height:0;border-top:4px solid transparent;border-bottom:4px solid transparent;border-right:4px solid #a3a3a3"></span><span class="abs" style="left:1863px;top:893px;width:0;height:0;border-top:3.8px solid transparent;border-bottom:3.8px solid transparent;border-left:4.5px solid #505050"></span><div class="hl" style="left:251px;top:904px;width:1621px"></div><svg class="abs" style="left:267px;top:918px" width="8" height="13" viewBox="0 0 8 13" fill="none" stroke="#c2c2c2" stroke-width="1.2"><path d="M7 0.5 L1 6.5 L7 12.5"/></svg><div class="abs" style="left:290px;top:912px;width:31px;height:28px;background:#009688;border-radius:2px;color:#fff;font-size:12px;line-height:24px;text-align:center">1</div><span class="abs" style="left:332px;top:915px;line-height:20px;font-size:12px;color:#333;white-space:nowrap">2</span><span class="abs" style="left:362px;top:915px;line-height:20px;font-size:12px;color:#333;white-space:nowrap">3</span><span class="abs" style="left:379.5px;top:915px;line-height:20px;font-size:12px;color:#333;white-space:nowrap">...</span><span class="abs" style="left:402px;top:915px;line-height:20px;font-size:12px;color:#333;white-space:nowrap">6</span><svg class="abs" style="left:435px;top:918px" width="8" height="13" viewBox="0 0 8 13" fill="none" stroke="#333" stroke-width="1.2"><path d="M1 0.5 L7 6.5 L1 12.5"/></svg><span class="abs" style="left:459px;top:915px;line-height:20px;font-size:12px;color:#999;white-space:nowrap">到第</span><div class="abs" style="left:493px;top:912px;width:40px;height:30px;border:1px solid #e6e6e6;border-radius:2px;text-align:center;font-size:12px;line-height:24px;color:#333">1</div><span class="abs" style="left:543px;top:915px;line-height:20px;font-size:12px;color:#999;white-space:nowrap">页</span><div class="abs" style="left:565px;top:912px;width:46px;height:30px;border:1px solid #e6e6e6;border-radius:2px;text-align:center;font-size:12px;line-height:26px;color:#333">确定</div><span class="abs" style="left:621px;top:915px;line-height:20px;font-size:12px;color:#333;white-space:nowrap">共 60 条</span><div class="abs" style="left:675px;top:912px;width:75px;height:30px;border:1px solid #e6e6e6;border-radius:2px;font-size:12px;line-height:24px;color:#333;padding-left:8px">10 条/页<svg class="abs" style="left:60px;top:9px" width="9" height="6" viewBox="0 0 9 6" fill="none" stroke="#111" stroke-width="1.8"><path d="M0.8 0.8 L4.5 4.8 L8.2 0.8"/></svg></div></body></html>
